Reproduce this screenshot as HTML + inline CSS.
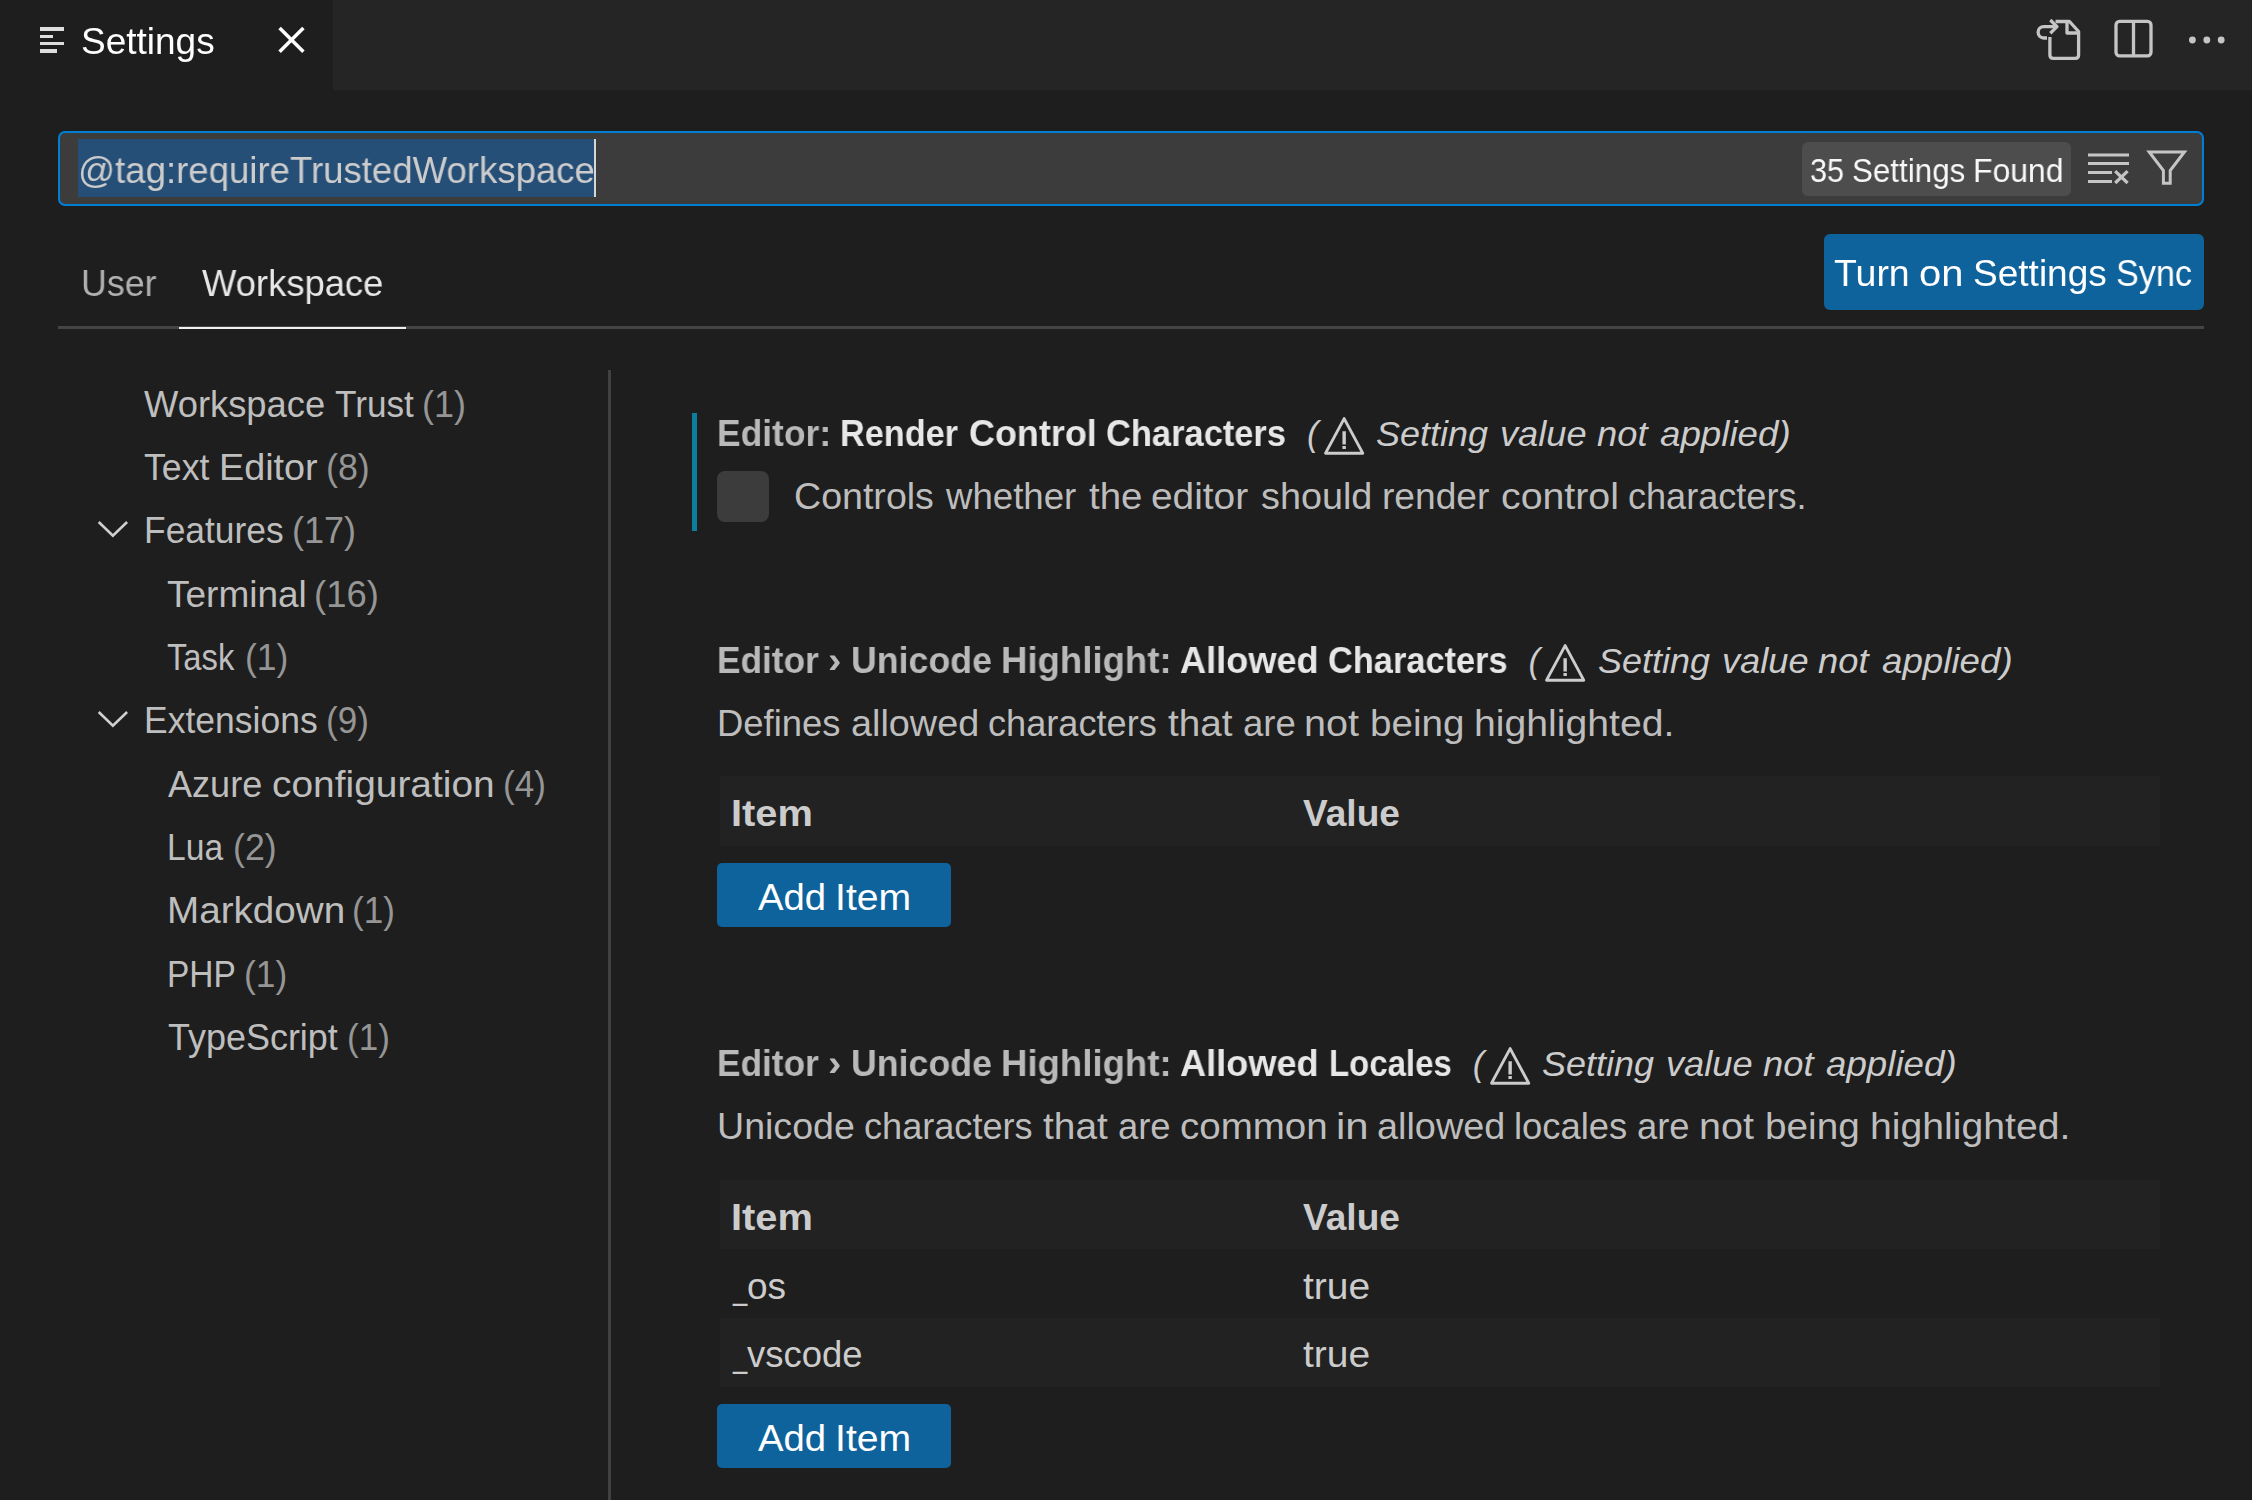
<!DOCTYPE html>
<html lang="en"><head><meta charset="utf-8"><title>Settings</title>
<style>
html,body{margin:0;padding:0}
body{width:2252px;height:1500px;overflow:hidden;background:#1e1e1e;position:relative;font-family:"Liberation Sans",sans-serif;color:#cccccc}
.t{position:absolute;white-space:nowrap;line-height:1;transform-origin:0 0}
.b{position:absolute}
.g{will-change:transform}
svg{position:absolute;overflow:visible}
</style></head>
<body>
<div class="tabbar">
<div class="b" style="left:0px;top:0px;width:2252px;height:90px;background:#252526;"></div>
<div class="b" style="left:0px;top:0px;width:333px;height:90px;background:#1e1e1e;"></div>
<div class="b" style="left:39.7px;top:27.2px;width:24px;height:3.8px;background:#dedede;"></div>
<div class="b" style="left:39.7px;top:34.7px;width:13.8px;height:3.5px;background:#dedede;"></div>
<div class="b" style="left:39.7px;top:42px;width:24px;height:3.4px;background:#dedede;"></div>
<div class="b" style="left:39.7px;top:49px;width:17.8px;height:3.8px;background:#dedede;"></div>
<span class="t g" style="left:80.62px;top:23.48px;font-size:37px;transform:scaleX(0.9987);color:#ffffff">Settings</span>
<svg style="left:270px;top:20px" width="44" height="44" viewBox="270 20 44 44"><path d="M279.6 28 L303.4 51.8 M303.4 28 L279.6 51.8" stroke="#ffffff" stroke-width="3.5" fill="none"/></svg>
<svg style="left:2030px;top:10px" width="210" height="70" viewBox="2030 10 210 70" fill="none" stroke="#c5c5c5" stroke-width="3.3" stroke-linejoin="round" stroke-linecap="butt">
<path d="M2055.5 21.5 H2069.5 L2078.6 31.5 V55 Q2078.6 58.4 2075.2 58.4 H2053.3 Q2049.9 58.4 2049.9 55 V37"/>
<path d="M2067 21.5 V33 H2078.6"/>
<path d="M2047 38 H2043.8 A5.7 5.7 0 0 1 2043.8 26.6 H2056"/>
<path d="M2050.3 20 L2057 26.6 L2050.3 33.2"/>
<rect x="2116" y="21.4" width="35" height="34.4" rx="3.5"/>
<path d="M2133.5 21.4 V55.8"/>
<g fill="#c5c5c5" stroke="none"><circle cx="2192.4" cy="40" r="3.4"/><circle cx="2206.8" cy="40" r="3.4"/><circle cx="2221.2" cy="40" r="3.4"/></g>
</svg>
</div>
<div class="search">
<div class="b" style="left:58px;top:131px;width:2146px;height:75px;box-sizing:border-box;border:2.5px solid #007fd4;border-radius:7px;background:#3c3c3c"></div>
<div class="b" style="left:78px;top:139px;width:516.2px;height:58px;background:#264f78;"></div>
<div class="b" style="left:594.2px;top:139px;width:1.9px;height:58px;background:#d6d6d6;"></div>
<span class="t g" style="left:77.68px;top:151.88px;font-size:37px;transform:scaleX(0.9885);color:#cccccc">@tag:requireTrustedWorkspace</span>
<div class="b" style="left:1802px;top:142px;width:269px;height:54px;background:#4d4d4d;border-radius:6px"></div>
<span class="t g" style="left:1810.05px;top:153.76px;font-size:33px;transform:scaleX(0.9299);color:#f8f8f8">35</span>
<span class="t g" style="left:1852.17px;top:153.76px;font-size:33px;transform:scaleX(0.9497);color:#f8f8f8">Settings</span>
<span class="t g" style="left:1973.37px;top:153.76px;font-size:33px;transform:scaleX(0.9674);color:#f8f8f8">Found</span>
<svg style="left:2080px;top:140px" width="120" height="60" viewBox="2080 140 120 60" fill="none" stroke="#c5c5c5" stroke-width="3">
<path d="M2088 155 H2129 M2088 163.6 H2129 M2088 172.6 H2112 M2088 181.4 H2112"/>
<path d="M2115.2 171.2 L2127.6 183 M2127.6 171.2 L2115.2 183" stroke-width="3.2"/>
<path d="M2149.2 152 H2184.4 L2170.2 170.5 V183.3 H2163.4 V170.5 Z" stroke-linejoin="miter"/>
</svg>
</div>
<div class="scope">
<div class="b" style="left:58px;top:326px;width:2146px;height:3px;background:#444444;"></div>
<div class="b" style="left:179px;top:326.7px;width:227px;height:2.4px;background:#f0f0f0;"></div>
<span class="t g" style="left:80.68px;top:264.58px;font-size:37px;transform:scaleX(0.9675);color:#b0b0b0">User</span>
<span class="t g" style="left:201.65px;top:264.58px;font-size:37px;transform:scaleX(0.9837);color:#e7e7e7">Workspace</span>
<div class="b" style="left:1824px;top:234px;width:380px;height:76px;background:#0e639c;border-radius:6px"></div>
<span class="t g" style="left:1834.40px;top:255.38px;font-size:37px;transform:scaleX(1.0138);color:#ffffff">Turn</span>
<span class="t g" style="left:1919.48px;top:255.38px;font-size:37px;transform:scaleX(1.0773);color:#ffffff">on</span>
<span class="t g" style="left:1972.92px;top:255.38px;font-size:37px;transform:scaleX(1.0010);color:#ffffff">Settings</span>
<span class="t g" style="left:2116.36px;top:255.38px;font-size:37px;transform:scaleX(0.9236);color:#ffffff">Sync</span>
</div>
<div class="toc">
<div class="b" style="left:608px;top:370px;width:3px;height:1130px;background:#414141;"></div>
<div class="toc-row">
<span class="t" style="left:144.35px;top:385.58px;font-size:37px;transform:scaleX(0.9826);color:#bebebe">Workspace</span>
<span class="t" style="left:335.25px;top:385.58px;font-size:37px;transform:scaleX(0.9511);color:#bebebe">Trust</span>
<span class="t" style="left:422.41px;top:385.58px;font-size:37px;transform:scaleX(0.9724);color:#959595">(1)</span>
</div>
<div class="toc-row">
<span class="t" style="left:143.94px;top:448.94px;font-size:37px;transform:scaleX(0.9638);color:#bebebe">Text</span>
<span class="t" style="left:219.13px;top:448.94px;font-size:37px;transform:scaleX(1.0210);color:#bebebe">Editor</span>
<span class="t" style="left:325.92px;top:448.94px;font-size:37px;transform:scaleX(0.9675);color:#959595">(8)</span>
</div>
<div class="toc-row">
<svg style="left:95px;top:519.82px" width="36" height="24" viewBox="0 0 36 24"><path d="M3.7 2 L17.9 15.6 L32.1 2" fill="none" stroke="#d0d0d0" stroke-width="2.6"/></svg>
<span class="t" style="left:143.72px;top:512.30px;font-size:37px;transform:scaleX(0.9571);color:#bebebe">Features</span>
<span class="t" style="left:291.70px;top:512.30px;font-size:37px;transform:scaleX(0.9747);color:#959595">(17)</span>
</div>
<div class="toc-row">
<span class="t" style="left:167.21px;top:575.66px;font-size:37px;transform:scaleX(1.0002);color:#bebebe">Terminal</span>
<span class="t" style="left:314.08px;top:575.66px;font-size:37px;transform:scaleX(0.9845);color:#959595">(16)</span>
</div>
<div class="toc-row">
<span class="t" style="left:167.30px;top:639.02px;font-size:37px;transform:scaleX(0.8848);color:#bebebe">Task</span>
<span class="t" style="left:244.54px;top:639.02px;font-size:37px;transform:scaleX(0.9601);color:#959595">(1)</span>
</div>
<div class="toc-row">
<svg style="left:95px;top:709.9px" width="36" height="24" viewBox="0 0 36 24"><path d="M3.7 2 L17.9 15.6 L32.1 2" fill="none" stroke="#d0d0d0" stroke-width="2.6"/></svg>
<span class="t" style="left:143.91px;top:702.38px;font-size:37px;transform:scaleX(0.9594);color:#bebebe">Extensions</span>
<span class="t" style="left:326.47px;top:702.38px;font-size:37px;transform:scaleX(0.9479);color:#959595">(9)</span>
</div>
<div class="toc-row">
<span class="t" style="left:168.06px;top:765.74px;font-size:37px;transform:scaleX(0.9748);color:#bebebe">Azure</span>
<span class="t" style="left:271.99px;top:765.74px;font-size:37px;transform:scaleX(1.0511);color:#bebebe">configuration</span>
<span class="t" style="left:502.77px;top:765.74px;font-size:37px;transform:scaleX(0.9479);color:#959595">(4)</span>
</div>
<div class="toc-row">
<span class="t" style="left:166.96px;top:829.10px;font-size:37px;transform:scaleX(0.9089);color:#bebebe">Lua</span>
<span class="t" style="left:233.43px;top:829.10px;font-size:37px;transform:scaleX(0.9650);color:#959595">(2)</span>
</div>
<div class="toc-row">
<span class="t" style="left:166.56px;top:892.46px;font-size:37px;transform:scaleX(1.0436);color:#bebebe">Markdown</span>
<span class="t" style="left:352.37px;top:892.46px;font-size:37px;transform:scaleX(0.9479);color:#959595">(1)</span>
</div>
<div class="toc-row">
<span class="t" style="left:166.97px;top:955.82px;font-size:37px;transform:scaleX(0.9046);color:#bebebe">PHP</span>
<span class="t" style="left:244.25px;top:955.82px;font-size:37px;transform:scaleX(0.9552);color:#959595">(1)</span>
</div>
<div class="toc-row">
<span class="t" style="left:167.63px;top:1019.18px;font-size:37px;transform:scaleX(0.9717);color:#bebebe">TypeScript</span>
<span class="t" style="left:347.37px;top:1019.18px;font-size:37px;transform:scaleX(0.9479);color:#959595">(1)</span>
</div>
</div>
<div class="settings">
<div class="setting">
<div class="b" style="left:692px;top:413px;width:5.4px;height:118.3px;background:#0c7d9d;"></div>
<span class="t g" style="left:717.41px;top:414.68px;font-size:37px;transform:scaleX(0.9567);color:#b9b9b9;font-weight:bold">Editor:</span>
<span class="t g" style="left:839.59px;top:414.68px;font-size:37px;transform:scaleX(0.9261);color:#e7e7e7;font-weight:bold">Render</span>
<span class="t g" style="left:969.37px;top:414.68px;font-size:37px;transform:scaleX(0.9714);color:#e7e7e7;font-weight:bold">Control</span>
<span class="t g" style="left:1106.23px;top:414.68px;font-size:37px;transform:scaleX(0.9311);color:#e7e7e7;font-weight:bold">Characters</span>
<span class="t" style="left:1306.94px;top:416.99px;font-size:34.5px;color:#cccccc;font-style:italic">(</span>
<svg style="left:1323.8px;top:416.7px" width="40.3" height="37.7" viewBox="0 0 40.3 37.7"><path d="M20.15 1.6 L38.75 36.2 H1.55 Z" fill="none" stroke="#cccccc" stroke-width="2.9" stroke-linejoin="round"/><path d="M20.15 14.3 V27.4 M20.15 29.1 V32.1" stroke="#cccccc" stroke-width="3.4"/></svg>
<span class="t" style="left:1376.04px;top:416.99px;font-size:34.5px;transform:scaleX(1.0417);color:#cccccc;font-style:italic">Setting</span>
<span class="t" style="left:1500.43px;top:416.99px;font-size:34.5px;transform:scaleX(1.0506);color:#cccccc;font-style:italic">value</span>
<span class="t" style="left:1596.78px;top:416.99px;font-size:34.5px;transform:scaleX(1.0524);color:#cccccc;font-style:italic">not</span>
<span class="t" style="left:1660.06px;top:416.99px;font-size:34.5px;transform:scaleX(1.0639);color:#cccccc;font-style:italic">applied)</span>
<div class="b" style="left:717px;top:471px;width:52px;height:51px;background:#3c3c3c;border-radius:8px"></div>
<span class="t" style="left:794.44px;top:477.58px;font-size:37px;transform:scaleX(1.0155);color:#bdbdbd">Controls</span>
<span class="t" style="left:945.69px;top:477.58px;font-size:37px;transform:scaleX(0.9898);color:#bdbdbd">whether</span>
<span class="t" style="left:1089.18px;top:477.58px;font-size:37px;transform:scaleX(1.0381);color:#bdbdbd">the</span>
<span class="t" style="left:1151.49px;top:477.58px;font-size:37px;transform:scaleX(1.0495);color:#bdbdbd">editor</span>
<span class="t" style="left:1260.83px;top:477.58px;font-size:37px;transform:scaleX(1.0213);color:#bdbdbd">should</span>
<span class="t" style="left:1382.29px;top:477.58px;font-size:37px;transform:scaleX(1.0035);color:#bdbdbd">render</span>
<span class="t" style="left:1501.37px;top:477.58px;font-size:37px;transform:scaleX(1.0621);color:#bdbdbd">control</span>
<span class="t" style="left:1628.31px;top:477.58px;font-size:37px;transform:scaleX(0.9753);color:#bdbdbd">characters.</span>
</div>
<div class="setting">
<span class="t g" style="left:717.22px;top:641.68px;font-size:37px;transform:scaleX(0.9515);color:#b9b9b9;font-weight:bold">Editor</span>
<span class="t g" style="left:828.33px;top:641.68px;font-size:37px;transform:scaleX(1.0913);color:#b9b9b9;font-weight:bold">›</span>
<span class="t g" style="left:851.09px;top:641.68px;font-size:37px;transform:scaleX(0.9655);color:#b9b9b9;font-weight:bold">Unicode</span>
<span class="t g" style="left:1001.43px;top:641.68px;font-size:37px;transform:scaleX(0.9887);color:#b9b9b9;font-weight:bold">Highlight:</span>
<span class="t g" style="left:1179.92px;top:641.68px;font-size:37px;transform:scaleX(0.9771);color:#e7e7e7;font-weight:bold">Allowed</span>
<span class="t g" style="left:1328.14px;top:641.68px;font-size:37px;transform:scaleX(0.9290);color:#e7e7e7;font-weight:bold">Characters</span>
<span class="t" style="left:1528.44px;top:643.99px;font-size:34.5px;color:#cccccc;font-style:italic">(</span>
<svg style="left:1545.3px;top:643.7px" width="40.3" height="37.7" viewBox="0 0 40.3 37.7"><path d="M20.15 1.6 L38.75 36.2 H1.55 Z" fill="none" stroke="#cccccc" stroke-width="2.9" stroke-linejoin="round"/><path d="M20.15 14.3 V27.4 M20.15 29.1 V32.1" stroke="#cccccc" stroke-width="3.4"/></svg>
<span class="t" style="left:1597.54px;top:643.99px;font-size:34.5px;transform:scaleX(1.0417);color:#cccccc;font-style:italic">Setting</span>
<span class="t" style="left:1721.93px;top:643.99px;font-size:34.5px;transform:scaleX(1.0506);color:#cccccc;font-style:italic">value</span>
<span class="t" style="left:1818.28px;top:643.99px;font-size:34.5px;transform:scaleX(1.0524);color:#cccccc;font-style:italic">not</span>
<span class="t" style="left:1881.56px;top:643.99px;font-size:34.5px;transform:scaleX(1.0639);color:#cccccc;font-style:italic">applied)</span>
<span class="t" style="left:717.04px;top:704.78px;font-size:37px;transform:scaleX(0.9840);color:#bdbdbd">Defines</span>
<span class="t" style="left:850.53px;top:704.78px;font-size:37px;transform:scaleX(1.0218);color:#bdbdbd">allowed</span>
<span class="t" style="left:988.11px;top:704.78px;font-size:37px;transform:scaleX(0.9769);color:#bdbdbd">characters</span>
<span class="t" style="left:1167.78px;top:704.78px;font-size:37px;transform:scaleX(1.0441);color:#bdbdbd">that</span>
<span class="t" style="left:1242.89px;top:704.78px;font-size:37px;transform:scaleX(0.9859);color:#bdbdbd">are</span>
<span class="t" style="left:1304.02px;top:704.78px;font-size:37px;transform:scaleX(1.0684);color:#bdbdbd">not</span>
<span class="t" style="left:1370.03px;top:704.78px;font-size:37px;transform:scaleX(1.0428);color:#bdbdbd">being</span>
<span class="t" style="left:1474.25px;top:704.78px;font-size:37px;transform:scaleX(1.0587);color:#bdbdbd">highlighted.</span>
<div class="b" style="left:720px;top:776.1px;width:1440px;height:69.9px;background:#222222;"></div>
<span class="t" style="left:730.91px;top:794.68px;font-size:37px;transform:scaleX(1.0766);color:#cccccc;font-weight:bold">Item</span>
<span class="t" style="left:1303.23px;top:794.68px;font-size:37px;transform:scaleX(1.0032);color:#cccccc;font-weight:bold">Value</span>
<div class="b" style="left:717px;top:863px;width:234.2px;height:64px;background:#0e639c;border-radius:5px"></div>
<span class="t" style="left:757.54px;top:878.78px;font-size:37px;transform:scaleX(1.0343);color:#ffffff">Add</span>
<span class="t" style="left:834.93px;top:878.78px;font-size:37px;transform:scaleX(1.0585);color:#ffffff">Item</span>
</div>
<div class="setting">
<span class="t g" style="left:717.22px;top:1044.68px;font-size:37px;transform:scaleX(0.9515);color:#b9b9b9;font-weight:bold">Editor</span>
<span class="t g" style="left:828.33px;top:1044.68px;font-size:37px;transform:scaleX(1.0913);color:#b9b9b9;font-weight:bold">›</span>
<span class="t g" style="left:851.09px;top:1044.68px;font-size:37px;transform:scaleX(0.9655);color:#b9b9b9;font-weight:bold">Unicode</span>
<span class="t g" style="left:1001.43px;top:1044.68px;font-size:37px;transform:scaleX(0.9887);color:#b9b9b9;font-weight:bold">Highlight:</span>
<span class="t g" style="left:1179.92px;top:1044.68px;font-size:37px;transform:scaleX(0.9771);color:#e7e7e7;font-weight:bold">Allowed</span>
<span class="t g" style="left:1329.37px;top:1044.68px;font-size:37px;transform:scaleX(0.8912);color:#e7e7e7;font-weight:bold">Locales</span>
<span class="t" style="left:1472.74px;top:1046.99px;font-size:34.5px;color:#cccccc;font-style:italic">(</span>
<svg style="left:1489.6px;top:1046.7px" width="40.3" height="37.7" viewBox="0 0 40.3 37.7"><path d="M20.15 1.6 L38.75 36.2 H1.55 Z" fill="none" stroke="#cccccc" stroke-width="2.9" stroke-linejoin="round"/><path d="M20.15 14.3 V27.4 M20.15 29.1 V32.1" stroke="#cccccc" stroke-width="3.4"/></svg>
<span class="t" style="left:1541.84px;top:1046.99px;font-size:34.5px;transform:scaleX(1.0417);color:#cccccc;font-style:italic">Setting</span>
<span class="t" style="left:1666.23px;top:1046.99px;font-size:34.5px;transform:scaleX(1.0506);color:#cccccc;font-style:italic">value</span>
<span class="t" style="left:1762.58px;top:1046.99px;font-size:34.5px;transform:scaleX(1.0524);color:#cccccc;font-style:italic">not</span>
<span class="t" style="left:1825.86px;top:1046.99px;font-size:34.5px;transform:scaleX(1.0639);color:#cccccc;font-style:italic">applied)</span>
<span class="t" style="left:716.55px;top:1107.68px;font-size:37px;transform:scaleX(1.0153);color:#bdbdbd">Unicode</span>
<span class="t" style="left:863.81px;top:1107.68px;font-size:37px;transform:scaleX(0.9763);color:#bdbdbd">characters</span>
<span class="t" style="left:1043.07px;top:1107.68px;font-size:37px;transform:scaleX(1.0506);color:#bdbdbd">that</span>
<span class="t" style="left:1118.19px;top:1107.68px;font-size:37px;transform:scaleX(0.9840);color:#bdbdbd">are</span>
<span class="t" style="left:1180.21px;top:1107.68px;font-size:37px;transform:scaleX(1.0408);color:#bdbdbd">common</span>
<span class="t" style="left:1335.67px;top:1107.68px;font-size:37px;transform:scaleX(1.1331);color:#bdbdbd">in</span>
<span class="t" style="left:1377.13px;top:1107.68px;font-size:37px;transform:scaleX(1.0227);color:#bdbdbd">allowed</span>
<span class="t" style="left:1513.61px;top:1107.68px;font-size:37px;transform:scaleX(0.9831);color:#bdbdbd">locales</span>
<span class="t" style="left:1637.09px;top:1107.68px;font-size:37px;transform:scaleX(0.9840);color:#bdbdbd">are</span>
<span class="t" style="left:1699.33px;top:1107.68px;font-size:37px;transform:scaleX(1.0663);color:#bdbdbd">not</span>
<span class="t" style="left:1765.42px;top:1107.68px;font-size:37px;transform:scaleX(1.0463);color:#bdbdbd">being</span>
<span class="t" style="left:1869.95px;top:1107.68px;font-size:37px;transform:scaleX(1.0587);color:#bdbdbd">highlighted.</span>
<div class="b" style="left:720px;top:1180px;width:1440px;height:69px;background:#222222;"></div>
<span class="t" style="left:730.91px;top:1198.78px;font-size:37px;transform:scaleX(1.0766);color:#cccccc;font-weight:bold">Item</span>
<span class="t" style="left:1303.23px;top:1198.78px;font-size:37px;transform:scaleX(1.0032);color:#cccccc;font-weight:bold">Value</span>
<span class="t" style="left:732.66px;top:1267.58px;font-size:37px;transform:scaleX(0.6918);color:#cccccc">_</span><span class="t" style="left:746.90px;top:1267.58px;font-size:37px;transform:scaleX(1.0001);color:#cccccc">os</span>
<span class="t" style="left:1303.07px;top:1267.58px;font-size:37px;transform:scaleX(1.0535);color:#cccccc">true</span>
<div class="b" style="left:720px;top:1317.8px;width:1440px;height:68.9px;background:#222222;"></div>
<span class="t" style="left:732.66px;top:1336.48px;font-size:37px;transform:scaleX(0.6918);color:#cccccc">_</span><span class="t" style="left:747.35px;top:1336.48px;font-size:37px;transform:scaleX(0.9855);color:#cccccc">vscode</span>
<span class="t" style="left:1303.07px;top:1336.48px;font-size:37px;transform:scaleX(1.0535);color:#cccccc">true</span>
<div class="b" style="left:717px;top:1404px;width:234.2px;height:63.5px;background:#0e639c;border-radius:5px"></div>
<span class="t" style="left:757.54px;top:1419.78px;font-size:37px;transform:scaleX(1.0343);color:#ffffff">Add</span>
<span class="t" style="left:834.93px;top:1419.78px;font-size:37px;transform:scaleX(1.0585);color:#ffffff">Item</span>
</div>
</div>
</body></html>
